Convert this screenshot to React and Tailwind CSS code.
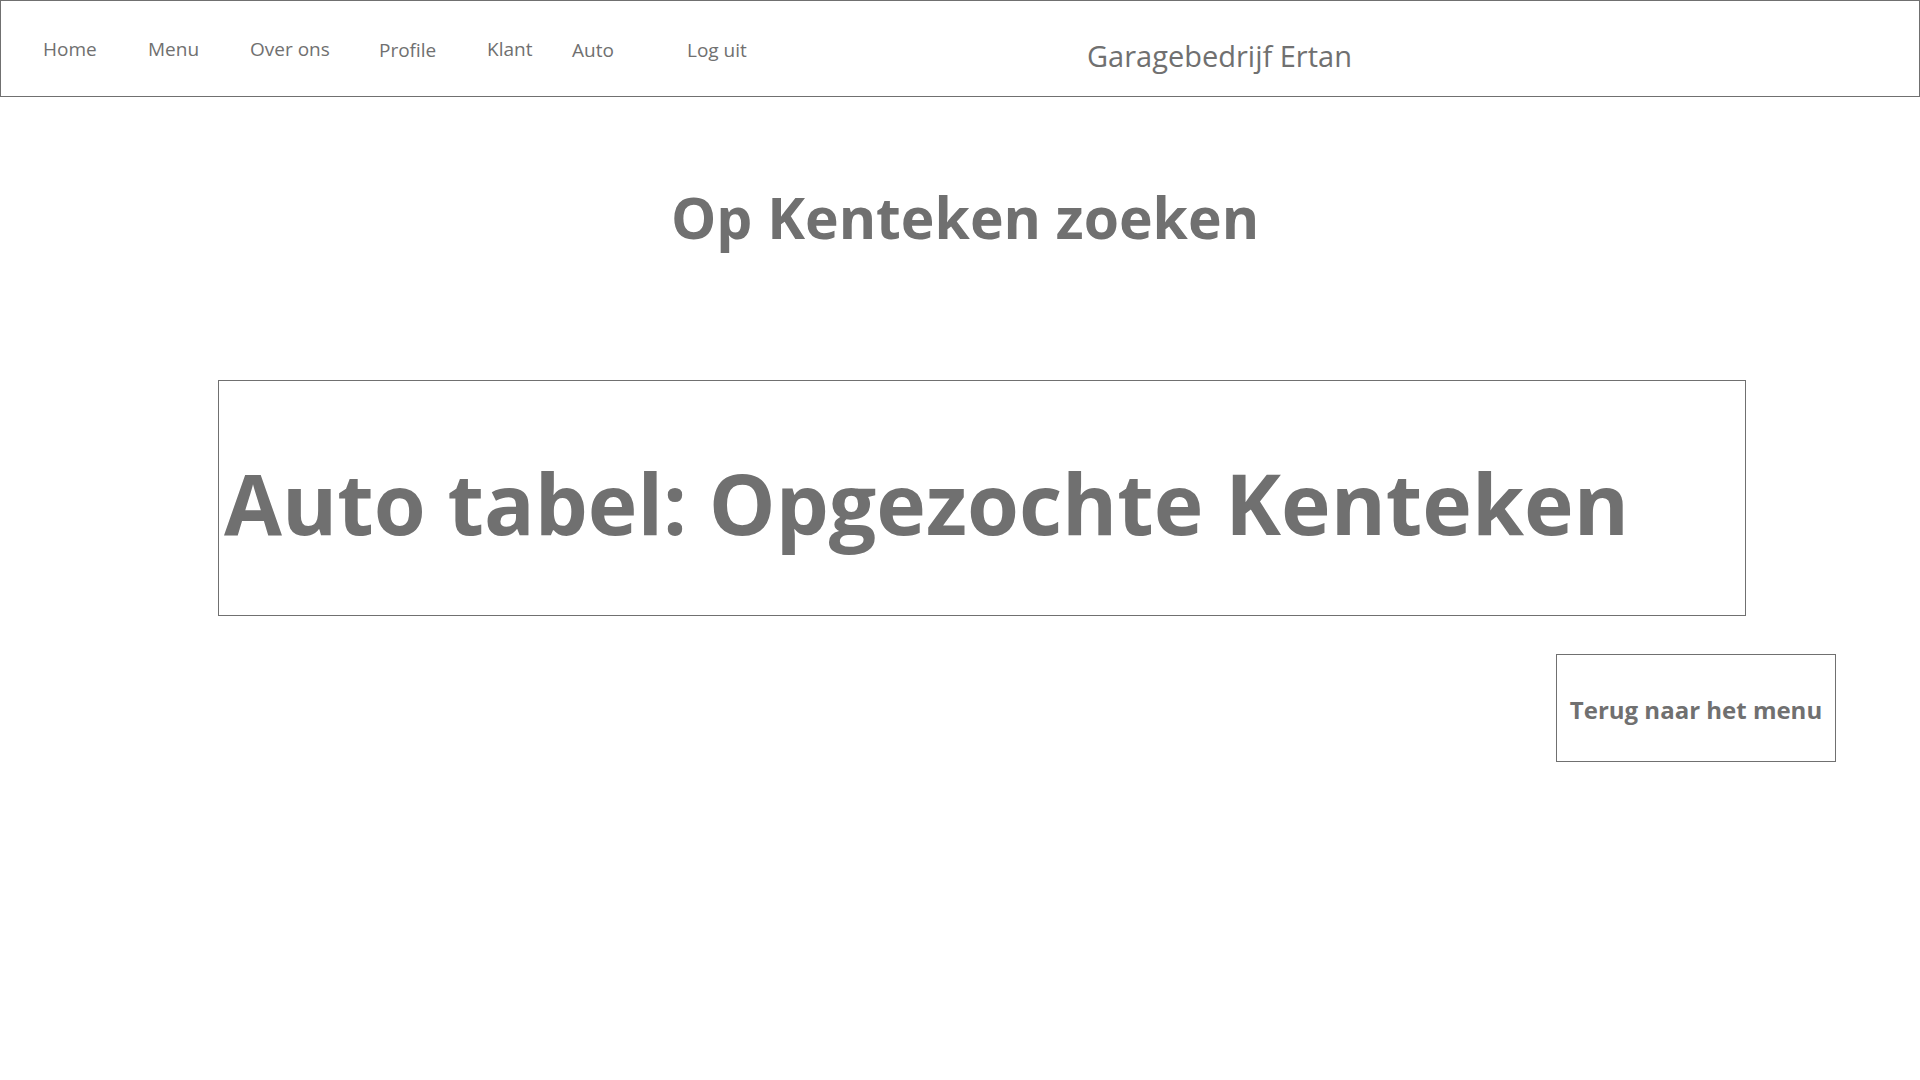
export default function App() {
    const navItems = [
        { label: 'Home', width: 'w-[105px]', offset: 'mt-[3px]' },
        { label: 'Menu', width: 'w-[102px]', offset: 'mt-[3px]' },
        { label: 'Over ons', width: 'w-[129px]', offset: 'mt-[3px]' },
        { label: 'Profile', width: 'w-[108px]', offset: 'mt-[5px]' },
        { label: 'Klant', width: 'w-[85px]', offset: 'mt-[3px]' },
        { label: 'Auto', width: 'w-[115px]', offset: 'mt-[5px]' },
        { label: 'Log uit', width: 'w-[400px]', offset: 'mt-[5px]' },
    ];

    return (
        <div className="min-h-screen bg-white text-[#707070] font-['Open_Sans','Noto_Sans',sans-serif]">
            {/* Header */}
            <header className="h-[97px] border border-[#707070] flex items-center pl-[42px]">
                {navItems.map((item) => (
                    <div key={item.label} className={`${item.width} ${item.offset}`}>
                        <a href="#" className="text-[19px] leading-none whitespace-nowrap">
                            {item.label}
                        </a>
                    </div>
                ))}
                <span className="mt-[14px] text-[29px] leading-none whitespace-nowrap">
                    Garagebedrijf Ertan
                </span>
            </header>

            {/* Title */}
            <h1 className="mt-[92px] pl-[10px] text-center text-[57px] font-bold leading-none">
                Op Kenteken zoeken
            </h1>

            {/* Auto tabel */}
            <section className="mt-[134px] ml-[218px] w-[1528px] h-[236px] border border-[#707070] pt-[80px] pl-[5px]">
                <h2 className="text-[84px] font-bold leading-none whitespace-nowrap">
                    Auto tabel: Opgezochte Kenteken
                </h2>
            </section>

            {/* Terug knop */}
            <div className="flex justify-end pr-[84px] mt-[38px]">
                <button className="w-[280px] h-[108px] border border-[#707070] bg-white pt-[4px] text-[24px] font-bold text-[#707070] leading-none">
                    Terug naar het menu
                </button>
            </div>
        </div>
    );
}
